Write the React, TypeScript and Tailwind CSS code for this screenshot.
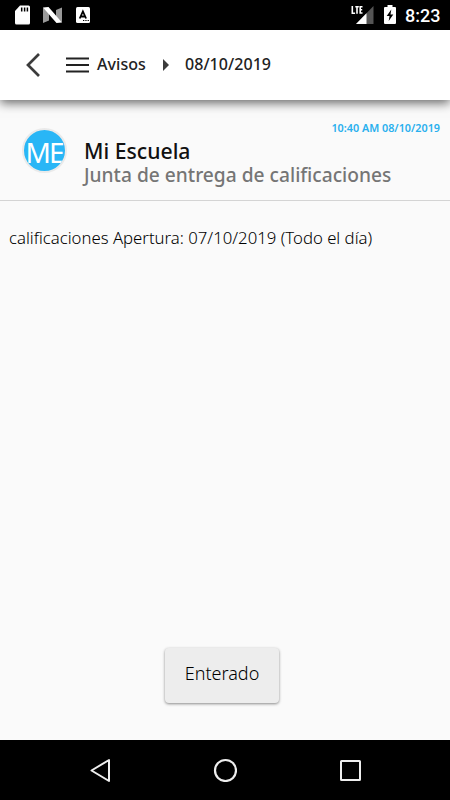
function StatusBar() {
  return (
    <div className="flex h-[30px] shrink-0 items-start bg-black text-white">
      <svg className="ml-[15px] mt-[5px] h-5 w-[15px]" viewBox="0 0 15 20">
        <path d="M5 .5h8.5A1.5 1.5 0 0 1 15 2v16a1.5 1.5 0 0 1-1.5 1.5h-12A1.5 1.5 0 0 1 0 18V6z" fill="#fff" />
        <path d="M6.7 2.5v4M9.6 2.5v4M12.4 2.5v4" stroke="#000" strokeWidth="1.5" />
      </svg>
      <svg className="ml-[13px] mt-[7px] h-4 w-[19px]" viewBox="0 0 19 16">
        <path d="M0 .5 6 5v8.500L0 16zM19 .5 13 3v7l6 5.500z" fill="#999" />
        <path d="M0 .5 5.500 0 19 15.500 13.500 16z" fill="#fff" />
      </svg>
      <svg className="ml-[14px] mt-[7px] h-4 w-[14px]" viewBox="0 0 14 16">
        <rect width="14" height="16" rx="1.500" fill="#fff" />
        <path d="M3.700 11.500 6.900 4.500l3.200 7M4.800 9.500h4.200" fill="none" stroke="#000" strokeWidth="1.800" />
        <path d="M7 13.500h1.300M9.300 13.500h1.300M11.600 13.500h1.300" stroke="#000" strokeWidth="1.200" />
      </svg>
      <div className="grow" />
      <svg className="mt-[5px] h-[19px] w-[23px]" viewBox="0 0 23 19">
        <path d="M1.300 1v7.200h2.800M4.300 1.700h3.500M6 1.700V8.700M11.500 1.700H9.200v6.300h2.300M9.200 4.700h2" fill="none" stroke="#fff" strokeWidth="1.600" />
        <path d="M22.500 1v18H5z" fill="#555" />
        <path d="M15.500 8.200V19H5z" fill="#fff" />
      </svg>
      <svg className="ml-[10px] mt-[5px] h-[19px] w-3" viewBox="0 0 12 19">
        <path d="M3.500 0h5v2H11a1 1 0 0 1 1 1v15a1 1 0 0 1-1 1H1a1 1 0 0 1-1-1V3a1 1 0 0 1 1-1h2.500z" fill="#fff" />
        <path d="M7.300 4.500 2.700 11H5.500L4.700 16 9.300 9.500H6.500z" fill="#000" />
      </svg>
      <span className="ml-[9px] mr-[10px] mt-[4px] w-[35px] whitespace-nowrap font-['Roboto',sans-serif] text-[18px] font-medium leading-[23px]">8:23</span>
    </div>
  );
}

function Header() {
  return (
    <header className="relative z-10 flex h-[70px] shrink-0 items-center bg-white text-[#222] shadow-[0_3px_10px_rgba(0,0,0,0.6)]">
      <svg className="ml-[26px] h-6 w-[14px]" viewBox="0 0 14 24">
        <path d="M13 1 2 12l11 11" fill="none" stroke="#3c3c3c" strokeWidth="2.700" />
      </svg>
      <svg className="ml-[26px] h-4 w-[23px]" viewBox="0 0 23 16">
        <path d="M0 1.500h23M0 8h23M0 14.500h23" stroke="#222" strokeWidth="2.200" />
      </svg>
      <span className="-mt-[2px] ml-[8px] w-[50px] whitespace-nowrap text-[16px] font-medium leading-6 tracking-[0.05px]">Avisos</span>
      <svg className="ml-[16px] h-3 w-[6px]" viewBox="0 0 6 12">
        <path d="M0 0 6 6 0 12z" fill="#3c3c3c" />
      </svg>
      <span className="-mt-[2px] ml-[16px] whitespace-nowrap text-[16px] font-medium leading-6 tracking-[0.05px]">08/10/2019</span>
    </header>
  );
}

function NoticeSummary() {
  return (
    <section className="flex h-[101px] shrink-0 flex-col border-b border-[#d4d4d4]">
      <time className="mr-[10px] mt-[20px] h-[17px] self-end text-[10.800px] font-semibold leading-4 text-[#29b0ee]">10:40 AM 08/10/2019</time>
      <div className="flex">
        <div className="-mt-[9px] ml-[22px] flex h-[45px] w-[45px] shrink-0 items-center justify-center overflow-hidden rounded-full border-2 border-[#eaeaea] bg-[#29b6f6]">
          <span className="pr-px pt-[3px] text-[28px] leading-[40px] tracking-[-2px] text-white">ME</span>
        </div>
        <div className="ml-[17px] mt-[2px] whitespace-nowrap">
          <h1 className="text-[21.200px] font-medium leading-[24px] text-[#111]">Mi Escuela</h1>
          <p className="text-[19.180px] font-medium leading-[24px] text-[#757575]">Junta de entrega de calificaciones</p>
        </div>
      </div>
    </section>
  );
}

function NavigationBar() {
  return (
    <nav className="flex h-[60px] shrink-0 items-center bg-black">
      <svg className="ml-[90px] h-6 w-[22px]" viewBox="0 0 22 24">
        <path d="M19 2v21L1.500 12.500z" fill="none" stroke="#eee" strokeWidth="2" strokeLinejoin="round" />
      </svg>
      <svg className="ml-[101px] h-6 w-6" viewBox="0 0 24 24">
        <circle cx="12.500" cy="12.500" r="10.500" fill="none" stroke="#eee" strokeWidth="2.200" />
      </svg>
      <svg className="ml-[102px] h-6 w-6" viewBox="0 0 24 24">
        <rect x="2" y="3" width="19" height="19" rx=".5" fill="none" stroke="#eee" strokeWidth="2" />
      </svg>
    </nav>
  );
}

export default function App() {
  return (
    <div className="flex h-[800px] w-[450px] flex-col overflow-hidden bg-[#fafafa] font-['Noto_Sans',sans-serif]">
      <StatusBar />
      <Header />
      <main className="flex grow flex-col">
        <NoticeSummary />
        <p className="ml-[9px] mt-[25px] whitespace-nowrap text-[16.740px] font-light leading-6 text-black">calificaciones Apertura: 07/10/2019 (Todo el día)</p>
        <div className="grow" />
        <button className="mb-[37px] ml-[165px] h-[55px] w-[114px] rounded-[4px] bg-[#ededed] pb-[4px] text-[18px] font-light text-black shadow-[0_1px_3px_rgba(0,0,0,0.45)]">Enterado</button>
      </main>
      <NavigationBar />
    </div>
  );
}
